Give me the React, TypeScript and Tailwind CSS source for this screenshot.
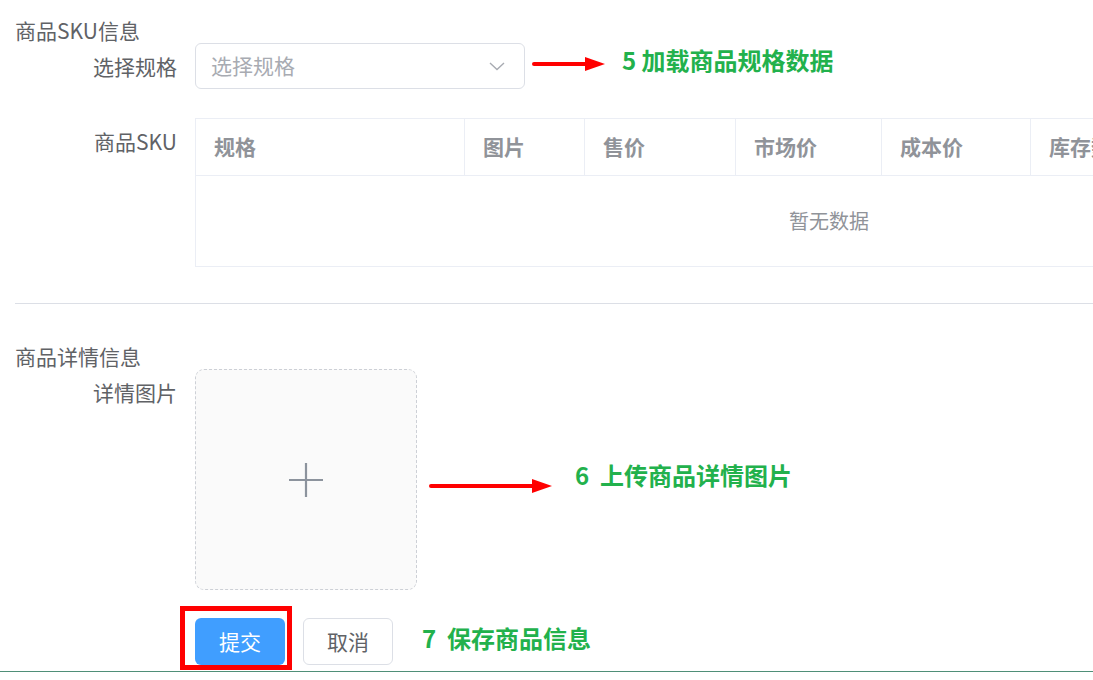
import React from "react";

const columns = [
    { name: "规格", width: 269 },
    { name: "图片", width: 120 },
    { name: "售价", width: 151 },
    { name: "市场价", width: 146 },
    { name: "成本价", width: 149 },
    { name: "库存数量", width: 149 },
    { name: "重量(公斤)", width: 149 },
    { name: "操作", width: 135 },
];

function Arrow({ width }: { width: number }) {
    return (
        <svg width={width} height="16" viewBox={`0 0 ${width} 16`} className="shrink-0">
            <line x1="2" y1="8" x2={width - 18} y2="8" stroke="#ff0000" strokeWidth="4" strokeLinecap="round" />
            <polygon points={`${width - 21},1 ${width - 1},8 ${width - 21},15`} fill="#ff0000" />
        </svg>
    );
}

function Note({ children }: { children: React.ReactNode }) {
    return (
        <span className="whitespace-pre text-[24px] leading-[32px] font-bold text-[#22b14c]">
            {children}
        </span>
    );
}

export default function App() {
    return (
        <div className="w-[1093px] h-[680px] bg-white overflow-hidden text-[#606266] text-[21px] font-['Noto_Sans_CJK_SC','Noto_Sans',sans-serif]">
            {/* SKU SECTION */}
            <div className="pl-[15px] pt-[17px] leading-[26px]">商品SKU信息</div>

            <div className="flex items-start pl-[15px]">
                <div className="w-[162px] text-right leading-[46px] shrink-0">选择规格</div>
                <div className="ml-[18px] w-[330px] h-[46px] border border-[#dcdfe6] rounded-[6px] flex items-center justify-between pl-[15px] pr-[18px] shrink-0">
                    <span className="text-[#a8abb2] text-[21px]">选择规格</span>
                    <svg width="18" height="18" viewBox="0 0 18 18" fill="none">
                        <path d="M2 6 L9 12.5 L16 6" stroke="#a8abb2" strokeWidth="1.4" />
                    </svg>
                </div>
                <div className="ml-[7px] mt-[13px]">
                    <Arrow width={74} />
                </div>
                <div className="ml-[16px] mt-[1px]">
                    <Note>5 加载商品规格数据</Note>
                </div>
            </div>

            <div className="flex items-start pl-[15px] mt-[29px]">
                <div className="w-[162px] text-right leading-[46px] shrink-0">商品SKU</div>
                <div className="ml-[18px] flex-1 overflow-hidden">
                    <div className="w-[1268px] border border-[#ebeef5]">
                        <div className="flex h-[57px] border-b border-[#ebeef5]">
                            {columns.map((col) => (
                                <div
                                    key={col.name}
                                    style={{ width: col.width }}
                                    className="shrink-0 border-r border-[#ebeef5] pl-[18px] flex items-center font-bold text-[#909399] text-[21px] whitespace-nowrap"
                                >
                                    {col.name}
                                </div>
                            ))}
                        </div>
                        <div className="h-[90px] flex items-center justify-center text-[#909399] text-[20px]">
                            暂无数据
                        </div>
                    </div>
                </div>
            </div>

            <div className="ml-[15px] mt-[36px] h-px bg-[#dcdfe6]" />

            {/* DETAIL SECTION */}
            <div className="pl-[15px] mt-[39px] leading-[26px]">商品详情信息</div>

            <div className="flex items-start pl-[15px]">
                <div className="w-[162px] text-right leading-[46px] shrink-0">详情图片</div>
                <div className="ml-[18px] w-[222px] h-[221px] border border-dashed border-[#cdd0d6] rounded-[9px] bg-[#fafafa] flex items-center justify-center shrink-0">
                    <svg width="36" height="36" viewBox="0 0 36 36">
                        <path d="M18 1 V35 M1 18 H35" stroke="#8c939d" strokeWidth="2.2" />
                    </svg>
                </div>
                <div className="ml-[12px] mt-[109px]">
                    <Arrow width={124} />
                </div>
                <div className="ml-[22px] mt-[90px]">
                    <Note>6  上传商品详情图片</Note>
                </div>
            </div>

            {/* BUTTONS */}
            <div className="flex items-start pl-[195px] mt-[28px]">
                <div className="relative">
                    <div className="absolute -left-[15px] -top-[12px] w-[112px] h-[64px] border-[5px] border-[#ff0000]" />
                    <button className="relative w-[90px] h-[47px] rounded-[6px] bg-[#409eff] text-white text-[21px]">
                        提交
                    </button>
                </div>
                <button className="ml-[18px] w-[90px] h-[47px] rounded-[6px] border border-[#dcdfe6] bg-white text-[#606266] text-[21px]">
                    取消
                </button>
                <div className="ml-[29px] mt-[4px]">
                    <Note>7  保存商品信息</Note>
                </div>
            </div>

            <div className="mt-[6px] h-px bg-[#4f8f78]" />
        </div>
    );
}
